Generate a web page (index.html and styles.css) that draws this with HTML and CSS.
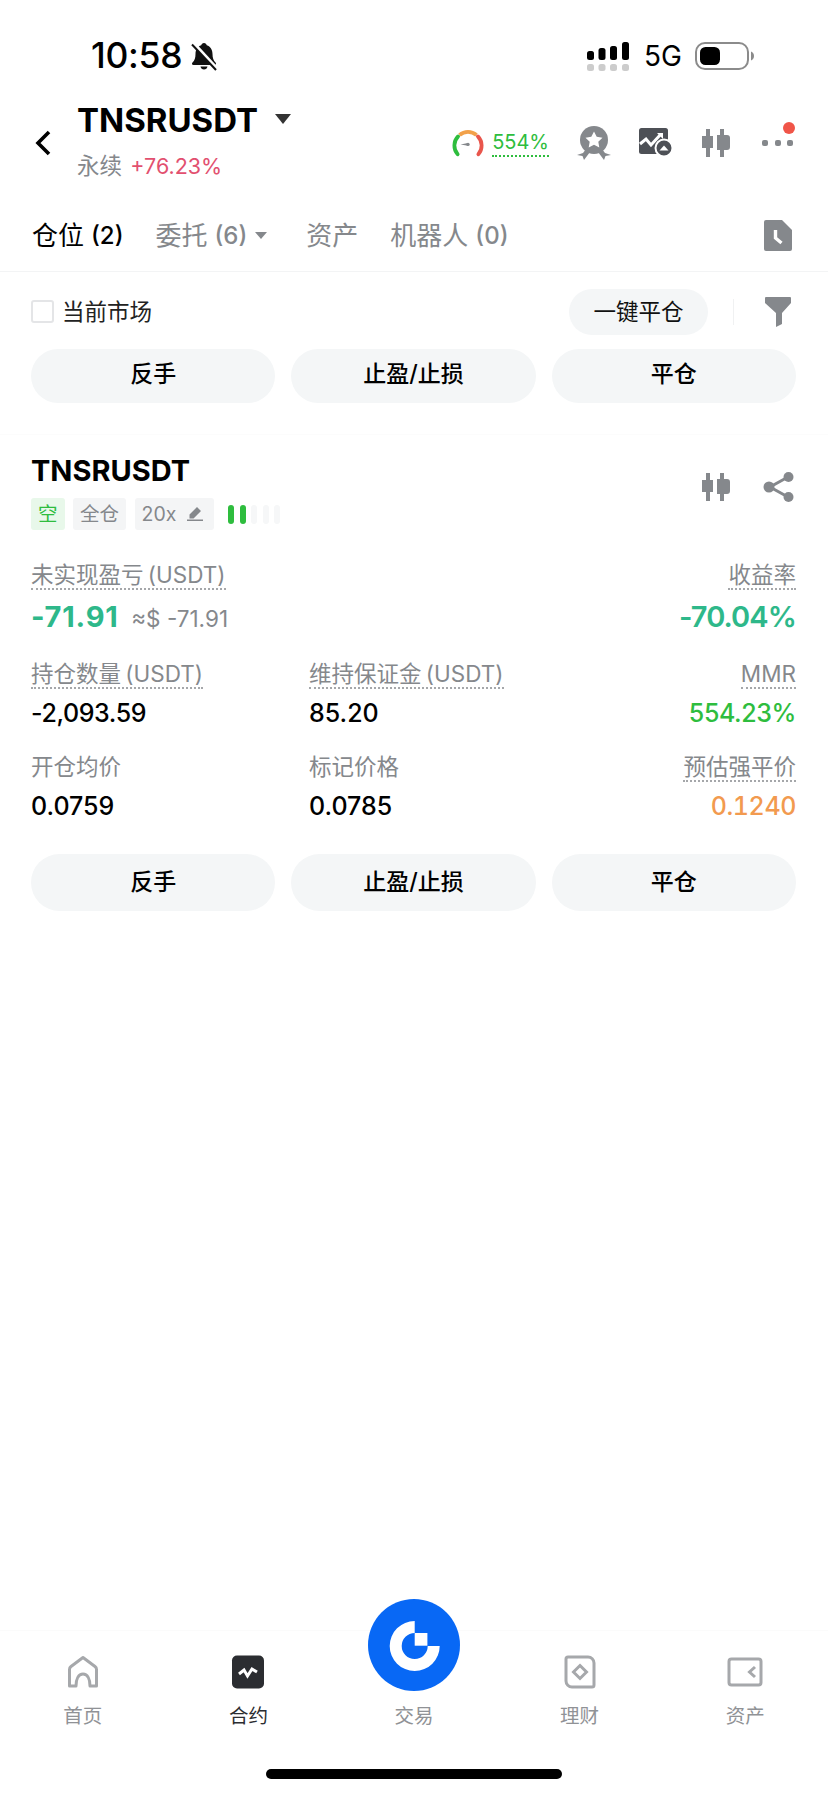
FILE: index.html
```html
<!DOCTYPE html>
<html lang="zh-CN">
    <head>
        <meta charset="UTF-8">
        <title>TNSRUSDT</title>
        <link rel="stylesheet" href="styles.css">
    </head>
    <body>
        <div class="status-bar">
            <div class="status-left">
                <span class="time">10:58</span>
                <svg class="bell" width="28" height="30" viewBox="0 0 28 28">
                    <path d="M14 1c1.500 0 2.500 1 2.800 2.300C20.500 4.500 22.500 8 22.500 12c0 4 1 6.500 3 8.500 1 1 .5 2.500-1 2.500H3.500c-1.500 0-2-1.500-1-2.500 2-2 3-4.500 3-8.500 0-4 2-7.500 5.700-8.700C11.500 2 12.500 1 14 1z" fill="#111"/>
                    <path d="M10.500 24.500h7c-.3 2-1.700 3-3.500 3s-3.200-1-3.500-3z" fill="#111"/>
                    <path d="M3.500 1.500l23 25" stroke="#fff" stroke-width="4"/>
                    <path d="M2 2.500l24 25.500" stroke="#111" stroke-width="2"/>
                </svg>
            </div>
            <div class="status-right">
                <svg width="44" height="30" viewBox="0 0 44 30">
                    <rect x="0" y="10" width="7" height="9" rx="2.500"/>
                    <rect x="11.500" y="7" width="7" height="12" rx="2.500"/>
                    <rect x="23" y="5" width="7" height="14" rx="2.500"/>
                    <rect x="35" y="1" width="7" height="18" rx="2.500"/>
                    <g fill="#ccc">
                        <rect x="0" y="23" width="7" height="7" rx="2.500"/>
                        <rect x="11.500" y="23" width="7" height="7" rx="2.500"/>
                        <rect x="23" y="23" width="7" height="7" rx="2.500"/>
                        <rect x="35" y="23" width="7" height="7" rx="2.500"/>
                    </g>
                </svg>
                <span class="network">5G</span>
                <svg width="60" height="28" viewBox="0 0 60 28">
                    <rect x="1" y="1" width="52" height="26" rx="9" fill="none" stroke="#8b8b8b" stroke-width="2"/>
                    <rect x="5" y="5" width="20" height="18" rx="5.500" fill="#000"/>
                    <path d="M56 9.500c2 .5 3 2.500 3 4.500s-1 4-3 4.500z" fill="#8b8b8b"/>
                </svg>
            </div>
        </div>

        <header class="top-bar">
            <div class="top-left">
                <svg class="back" width="18" height="26" viewBox="0 0 18 26">
                    <path d="M15 2L4 13l11 11" fill="none" stroke="#000" stroke-width="3.600"/>
                </svg>
                <div class="symbol-block">
                    <div class="symbol">TNSRUSDT <i class="caret"></i></div>
                    <div class="symbol-sub">永续 <span class="change">+76.23%</span></div>
                </div>
            </div>
            <div class="top-right">
                <svg class="gauge" width="32" height="30" viewBox="0 0 34 30">
                    <path d="M6 27A14 14 0 0 1 6.500 8" fill="none" stroke="#2ebd3e" stroke-width="4" stroke-linecap="round"/>
                    <path d="M8 6.500A14 14 0 0 1 26 6.500" fill="none" stroke="#f2a14a" stroke-width="4"/>
                    <path d="M27.500 8A14 14 0 0 1 28 27" fill="none" stroke="#e9564c" stroke-width="4" stroke-linecap="round"/>
                    <path d="M9 16.500l8-1.500v3z" fill="#85888c"/>
                    <circle cx="17" cy="16.500" r="1.800" fill="#85888c"/>
                </svg>
                <span class="risk">554%</span>
                <svg class="medal" width="36" height="36" viewBox="0 0 36 36">
                    <circle cx="18" cy="15" r="14" fill="#85888c"/>
                    <path d="M18 6.500l2.700 5.300 5.800.9-4.200 4.100 1 5.800-5.300-2.800-5.300 2.800 1-5.800-4.200-4.100 5.800-.9z" fill="#fff"/>
                    <path d="M1 30l6-2 3-4 4 3-6 8-1.500-4zM35 30l-6-2-3-4-4 3 6 8 1.500-4z" fill="#85888c"/>
                </svg>
                <svg class="chart-icon" width="34" height="30" viewBox="0 0 34 30">
                    <rect x="0" y="0" width="29" height="26" rx="2.500" fill="#4d5056"/>
                    <path d="M1 16l6-5 5 6L22 6" fill="none" stroke="#fff" stroke-width="3"/>
                    <path d="M18 5h6v6z" fill="#fff"/>
                    <circle cx="25" cy="20" r="8.500" fill="#4d5056" stroke="#fff" stroke-width="2"/>
                    <path d="M20.500 22.500l4.500-5 4.500 5z" fill="#fff"/>
                </svg>
                <svg class="candle-icon" width="30" height="30" viewBox="0 0 30 30">
                    <path d="M5 1h4v7h3v12H9v9H5v-9H1V8h4zM19 1h4v6h3a3 3 0 0 1 3 3v9a3 3 0 0 1-3 3h-3v7h-4v-7h-3V7h3z" fill="#85888c"/>
                </svg>
                <div class="more-icon">
                    <i></i><i></i><i></i>
                    <b class="red-dot"></b>
                </div>
            </div>
        </header>

        <nav class="tabs">
            <span class="tab tab-active">仓位 <small>(2)</small></span>
            <span class="tab">委托 <small>(6)</small><i class="tab-caret"></i></span>
            <span class="tab">资产</span>
            <span class="tab">机器人 <small>(0)</small></span>
            <svg class="file-icon" width="28" height="31" viewBox="0 0 28 31">
                <path d="M2 0h16l10 10v19a2 2 0 0 1-2 2H2a2 2 0 0 1-2-2V2a2 2 0 0 1 2-2z" fill="#85888c"/>
                <path d="M11.500 10v8l6 5" fill="none" stroke="#fff" stroke-width="3.400"/>
            </svg>
        </nav>

        <main class="content">
            <section class="actions">
                <div class="filter-row">
                    <label class="market-check"><i class="checkbox"></i>当前市场</label>
                    <div class="filter-right">
                        <span class="close-all">一键平仓</span>
                        <i class="v-line"></i>
                        <svg width="26" height="30" viewBox="0 0 26 30">
                            <path d="M1 0h24a1 1 0 0 1 1 1v5l-9 10v11l-6 3V16L0 6V1a1 1 0 0 1 1-1z" fill="#85888c"/>
                        </svg>
                    </div>
                </div>
                <div class="btn-row">
                    <span class="btn">反手</span>
                    <span class="btn">止盈/止损</span>
                    <span class="btn">平仓</span>
                </div>
            </section>

            <section class="position">
                <div class="pos-head">
                    <div>
                        <div class="pos-symbol">TNSRUSDT</div>
                        <div class="tags">
                            <span class="tag tag-short">空</span>
                            <span class="tag">全仓</span>
                            <span class="tag tag-lev">20x
                                <svg width="16" height="16" viewBox="0 0 16 16">
                                    <path d="M10 1l4 4-7.500 7.500H2.500v-4zM0 15h16v-1.500H0z" fill="#85888c"/>
                                </svg>
                            </span>
                            <div class="risk-bars">
                                <i class="on"></i><i class="on"></i><i></i><i></i><i></i>
                            </div>
                        </div>
                    </div>
                    <div class="pos-icons">
                        <svg width="30" height="30" viewBox="0 0 30 30">
                            <path d="M5 1h4v7h3v12H9v9H5v-9H1V8h4zM19 1h4v6h3a3 3 0 0 1 3 3v9a3 3 0 0 1-3 3h-3v7h-4v-7h-3V7h3z" fill="#85888c"/>
                        </svg>
                        <svg width="32" height="32" viewBox="0 0 32 32">
                            <path d="M25 6L7 16l18 10" fill="none" stroke="#85888c" stroke-width="3"/>
                            <circle cx="25.500" cy="6" r="5" fill="#85888c"/>
                            <circle cx="6" cy="16" r="5.500" fill="#85888c"/>
                            <circle cx="25.500" cy="26" r="5" fill="#85888c"/>
                        </svg>
                    </div>
                </div>

                <div class="stats">
                    <div class="stat stat-wide">
                        <span class="stat-label dotted">未实现盈亏 (USDT)</span>
                        <div class="stat-value big green">-71.91 <span class="approx">≈$ -71.91</span></div>
                    </div>
                    <div class="stat stat-right">
                        <span class="stat-label dotted">收益率</span>
                        <div class="stat-value big big-pct green">-70.04%</div>
                    </div>

                    <div class="stat">
                        <span class="stat-label dotted">持仓数量 (USDT)</span>
                        <div class="stat-value tight">-2,093.59</div>
                    </div>
                    <div class="stat">
                        <span class="stat-label dotted">维持保证金 (USDT)</span>
                        <div class="stat-value">85.20</div>
                    </div>
                    <div class="stat stat-right">
                        <span class="stat-label dotted">MMR</span>
                        <div class="stat-value tight safe">554.23%</div>
                    </div>

                    <div class="stat">
                        <span class="stat-label">开仓均价</span>
                        <div class="stat-value">0.0759</div>
                    </div>
                    <div class="stat">
                        <span class="stat-label">标记价格</span>
                        <div class="stat-value">0.0785</div>
                    </div>
                    <div class="stat stat-right">
                        <span class="stat-label dotted">预估强平价</span>
                        <div class="stat-value tnum orange">0.1240</div>
                    </div>
                </div>

                <div class="btn-row btn-row-card">
                    <span class="btn">反手</span>
                    <span class="btn">止盈/止损</span>
                    <span class="btn">平仓</span>
                </div>
            </section>
        </main>

        <footer class="bottom-nav">
            <svg class="logo" width="92" height="92" viewBox="0 0 92 92">
                <circle cx="46" cy="46" r="46" fill="#0868f5"/>
                <path d="M46.700 22A25 25 0 1 0 71.700 47H59.700A13 13 0 1 1 46.700 34Z" fill="#fff"/>
                <rect x="46.700" y="34" width="12.700" height="12.700" fill="#fff"/>
            </svg>
            <div class="nav-items">
                <div class="nav-item">
                    <svg width="36" height="36" viewBox="0 0 36 36">
                        <path d="M4.500 32V15.500c0-1.200.5-2.200 1.500-3L18 3.500l12 9c1 .8 1.500 1.800 1.500 3V32H25c0-7-2.500-12-7-12s-7 5-7 12z" fill="none" stroke="#a6a8ab" stroke-width="3" stroke-linejoin="round"/>
                    </svg>
                    <span>首页</span>
                </div>
                <div class="nav-item nav-item-active">
                    <svg width="36" height="36" viewBox="0 0 36 36">
                        <rect x="2" y="1.500" width="32" height="33" rx="5" fill="#2b2d31"/>
                        <path d="M9 20l5-4 3.500 6 4.500-7 5 3" fill="none" stroke="#fff" stroke-width="3"/>
                    </svg>
                    <span>合约</span>
                </div>
                <div class="nav-item">
                    <div class="nav-spacer"></div>
                    <span>交易</span>
                </div>
                <div class="nav-item">
                    <svg width="36" height="36" viewBox="0 0 36 36">
                        <path d="M6 3h20a6 6 0 0 1 6 6v22a2 2 0 0 1-2 2H10a6 6 0 0 1-6-6V5a2 2 0 0 1 2-2z" fill="none" stroke="#a6a8ab" stroke-width="3"/>
                        <path d="M18 11.500l6.500 6.500-6.500 6.500-6.500-6.500z" fill="none" stroke="#a6a8ab" stroke-width="3"/>
                    </svg>
                    <span>理财</span>
                </div>
                <div class="nav-item">
                    <svg width="36" height="36" viewBox="0 0 36 36">
                        <rect x="2" y="5" width="32" height="26" rx="2.500" fill="none" stroke="#a6a8ab" stroke-width="3"/>
                        <path d="M28 13l-5.500 5 5.500 5" fill="none" stroke="#a6a8ab" stroke-width="3"/>
                    </svg>
                    <span>资产</span>
                </div>
            </div>
            <div class="home-bar"></div>
        </footer>
    </body>
</html>
```

FILE: styles.css
```css
* {
    box-sizing: border-box;
}
html, body {
    margin: 0;
    padding: 0;
}
body {
    width: 828px;
    height: 1795px;
    display: flex;
    flex-direction: column;
    background: #fff;
    color: #000;
    font-family: Inter, "Noto Sans CJK SC", sans-serif;
    overflow: hidden;
}
i {
    font-style: normal;
}

/* status bar */
.status-bar {
    height: 96px;
    padding: 16px 73px 0 91px;
    display: flex;
    justify-content: space-between;
    align-items: center;
}
.status-left, .status-right {
    display: flex;
    align-items: center;
}
.time {
    font-size: 35.500px;
    font-weight: 500;
    line-height: 40px;
    letter-spacing: -0.3px;
}
.bell {
    margin-left: 8px;
}
.status-right {
    gap: 13px;
}
.network {
    font-size: 28px;
    line-height: 32px;
}

/* symbol header */
.top-bar {
    height: 94px;
    padding: 0 35px 0 34px;
    display: flex;
    justify-content: space-between;
    align-items: center;
}
.top-left, .top-right {
    display: flex;
    align-items: center;
}
.back {
    margin-right: 25px;
}
.symbol-block {
    padding-bottom: 4px;
}
.symbol {
    font-size: 33px;
    font-weight: 700;
    line-height: 40px;
    display: flex;
    align-items: center;
}
.caret {
    width: 0;
    height: 0;
    margin-left: 17px;
    margin-bottom: 3px;
    border-left: 8px solid transparent;
    border-right: 8px solid transparent;
    border-top: 10px solid #333;
}
.symbol-sub {
    margin-top: 10px;
    font-size: 22.500px;
    line-height: 32px;
    color: #85888c;
}
.change {
    font-size: 21.500px;
    color: #e2506f;
    margin-left: 2px;
}
.risk {
    margin-left: 8px;
    font-size: 20px;
    line-height: 25px;
    color: #2ebd3e;
    border-bottom: 2px dotted #2ebd3e;
}
.medal {
    margin-left: 27px;
}
.chart-icon {
    margin-left: 27px;
}
.candle-icon {
    margin-left: 28px;
}
.more-icon {
    position: relative;
    margin-left: 31px;
    width: 31px;
    display: flex;
    justify-content: space-between;
}
.more-icon i {
    width: 6px;
    height: 6px;
    border-radius: 2px;
    background: #85888c;
}
.red-dot {
    position: absolute;
    right: -2px;
    top: -18px;
    width: 12px;
    height: 12px;
    border-radius: 50%;
    background: #f05548;
}

/* tabs */
.tabs {
    height: 82px;
    padding: 10px 36px 0 32px;
    display: flex;
    align-items: center;
    border-bottom: 1px solid #f3f4f5;
}
.tab {
    font-size: 26px;
    line-height: 36px;
    color: #85888c;
    margin-right: 32px;
    display: flex;
    align-items: center;
    gap: 7px;
}
.tab small {
    font-size: 24px;
    font-weight: 500;
}
.tab-active {
    color: #000;
}
.tab-caret {
    width: 0;
    height: 0;
    margin-left: 1px;
    margin-right: 7px;
    border-left: 6px solid transparent;
    border-right: 6px solid transparent;
    border-top: 7px solid #85888c;
}
.file-icon {
    margin-left: auto;
}

/* filter + buttons */
.content {
    flex: 1;
}
.actions {
    padding: 17px 32px 31px 31px;
    border-bottom: 1px solid #fcfcfc;
}
.filter-row {
    display: flex;
    justify-content: space-between;
    align-items: center;
    height: 46px;
}
.market-check {
    display: flex;
    align-items: center;
    font-size: 22.500px;
    line-height: 30px;
    margin-top: -1px;
    color: #222;
}
.checkbox {
    width: 23px;
    height: 23px;
    margin-right: 8px;
    border: 2px solid #e4e5e7;
    border-radius: 3px;
}
.filter-right {
    display: flex;
    align-items: center;
    margin-right: 5px;
}
.close-all {
    width: 139px;
    height: 46px;
    line-height: 46px;
    text-align: center;
    font-size: 22.500px;
    color: #111;
    background: #f4f6f7;
    border-radius: 23px;
}
.v-line {
    width: 1px;
    height: 26px;
    margin: 0 31px 0 25px;
    background: #f0f1f2;
}
.btn-row {
    margin-top: 14px;
    display: grid;
    grid-template-columns: repeat(3, 1fr);
    gap: 16px;
}
.btn {
    height: 54px;
    line-height: 50px;
    text-align: center;
    font-size: 23px;
    font-weight: 500;
    color: #000;
    background: #f4f6f7;
    border-radius: 27px;
}

/* position card */
.position {
    padding: 20px 32px 0 31px;
}
.pos-head {
    display: flex;
    justify-content: space-between;
    align-items: flex-start;
}
.pos-symbol {
    font-size: 29px;
    font-weight: 700;
    line-height: 32px;
}
.tags {
    margin-top: 11px;
    height: 32px;
    display: flex;
    align-items: center;
    gap: 8.500px;
}
.tag {
    height: 32px;
    line-height: 32px;
    padding: 0 7px;
    font-size: 19.500px;
    color: #85888c;
    background: #f4f5f6;
    border-radius: 3px;
}
.tag-short {
    padding: 0 7px;
    color: #2ebd3e;
    background: #e8f8ea;
}
.tag-lev {
    display: flex;
    align-items: center;
    gap: 11px;
    width: 79px;
    font-size: 19.500px;
}
.risk-bars {
    margin-left: 6px;
    display: flex;
    gap: 5.500px;
}
.risk-bars i {
    width: 6px;
    height: 19px;
    border-radius: 3px;
    background: #f6f7f8;
}
.risk-bars .on {
    background: #2ebd3e;
}
.pos-icons {
    margin-top: 16px;
    margin-right: 1px;
    display: flex;
    align-items: center;
    gap: 32px;
}
.stats {
    margin-top: 32px;
    display: grid;
    grid-template-columns: 278px 1fr auto;
    row-gap: 24px;
}
.stat-wide {
    grid-column: span 2;
}
.stat-right {
    text-align: right;
}
.stat-label {
    display: inline-block;
    font-size: 22.500px;
    word-spacing: -2px;
    line-height: 26px;
    height: 28px;
    color: #85888c;
}
.dotted {
    border-bottom: 2px dotted #a5a7aa;
}
.stat-value {
    margin-top: 7px;
    font-size: 25px;
    font-weight: 500;
    line-height: 34px;
}
.tight {
    letter-spacing: -0.4px;
}
.tnum {
    font-variant-numeric: tabular-nums;
    letter-spacing: -0.4px;
}
.big {
    margin-top: 9px;
    font-size: 29px;
    font-weight: 700;
    letter-spacing: 0.8px;
    line-height: 36px;
}
.big-pct {
    font-weight: 600;
    letter-spacing: -0.9px;
}
.green {
    color: #2eb88a;
}
.safe {
    color: #2ebd3e;
}
.orange {
    color: #f29a4f;
}
.approx {
    margin-left: 5px;
    font-size: 22.500px;
    font-weight: 400;
    letter-spacing: 0;
    color: #85888c;
}
.btn-row-card {
    margin-top: 31px;
}
.btn-row-card .btn {
    height: 57px;
    line-height: 56px;
    border-radius: 29px;
}

/* bottom nav */
.bottom-nav {
    position: relative;
    height: 165px;
    padding-top: 23px;
    border-top: 1px solid #fbfbfb;
}
.logo {
    position: absolute;
    left: 368px;
    top: -32px;
}
.nav-items {
    display: grid;
    grid-template-columns: repeat(5, 1fr);
}
.nav-item {
    display: flex;
    flex-direction: column;
    align-items: center;
    font-size: 19.500px;
    line-height: 26px;
    color: #909296;
}
.nav-item span {
    margin-top: 13px;
}
.nav-item svg, .nav-spacer {
    width: 36px;
    height: 36px;
}
.nav-item-active {
    color: #2b2d31;
}
.home-bar {
    width: 296px;
    height: 10px;
    margin: 40px auto 0;
    background: #000;
    border-radius: 5px;
}
```
